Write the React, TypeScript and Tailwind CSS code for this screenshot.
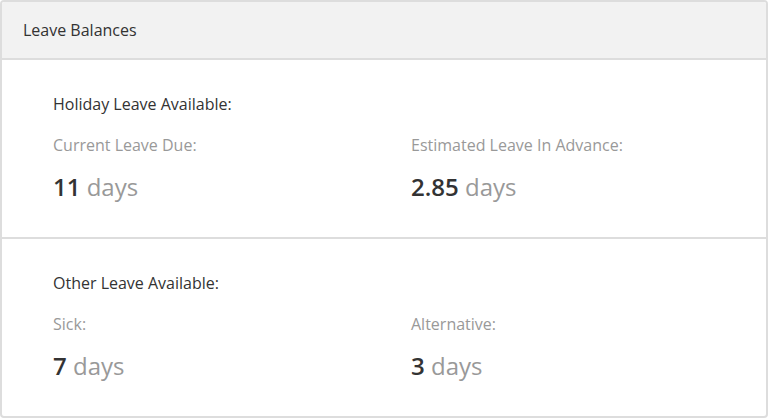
import React from "react";

function Item({ label, value }: { label: string; value: string }) {
  return (
    <div>
      <div className="text-[16px] leading-[22px] text-[#999999]">{label}</div>
      <div className="mt-[15px] text-[24px] leading-[32px]">
        <span className="font-semibold text-[#333333]">{value}</span>
        <span className="text-[#999999]"> days</span>
      </div>
    </div>
  );
}

function Section({
  title,
  items,
  last,
}: {
  title: string;
  items: { label: string; value: string }[];
  last?: boolean;
}) {
  return (
    <div
      className={`pl-[51px] pt-[33px] ${last ? "h-[177px]" : "h-[179px] border-b-2 border-[#dddddd]"}`}
    >
      <div className="text-[16px] leading-[22px] text-[#333333]">{title}</div>
      <div className="mt-[19px] grid grid-cols-[358px_1fr]">
        {items.map((it) => (
          <Item key={it.label} label={it.label} value={it.value} />
        ))}
      </div>
    </div>
  );
}

export default function App() {
  return (
    <div
      className="w-[768px] h-[418px] bg-white"
      style={{ fontFamily: '"Open Sans", "Noto Sans", sans-serif' }}
    >
      <div className="box-border h-[418px] w-[768px] overflow-hidden rounded-[4px] border-2 border-[#dddddd] bg-white">
        <div className="flex h-[58px] items-center border-b-2 border-[#dddddd] bg-[#f2f2f2] pl-[21px] text-[16px] text-[#333333]">
          Leave Balances
        </div>
        <Section
          title="Holiday Leave Available:"
          items={[
            { label: "Current Leave Due:", value: "11" },
            { label: "Estimated Leave In Advance:", value: "2.85" },
          ]}
        />
        <Section
          title="Other Leave Available:"
          last
          items={[
            { label: "Sick:", value: "7" },
            { label: "Alternative:", value: "3" },
          ]}
        />
      </div>
    </div>
  );
}
